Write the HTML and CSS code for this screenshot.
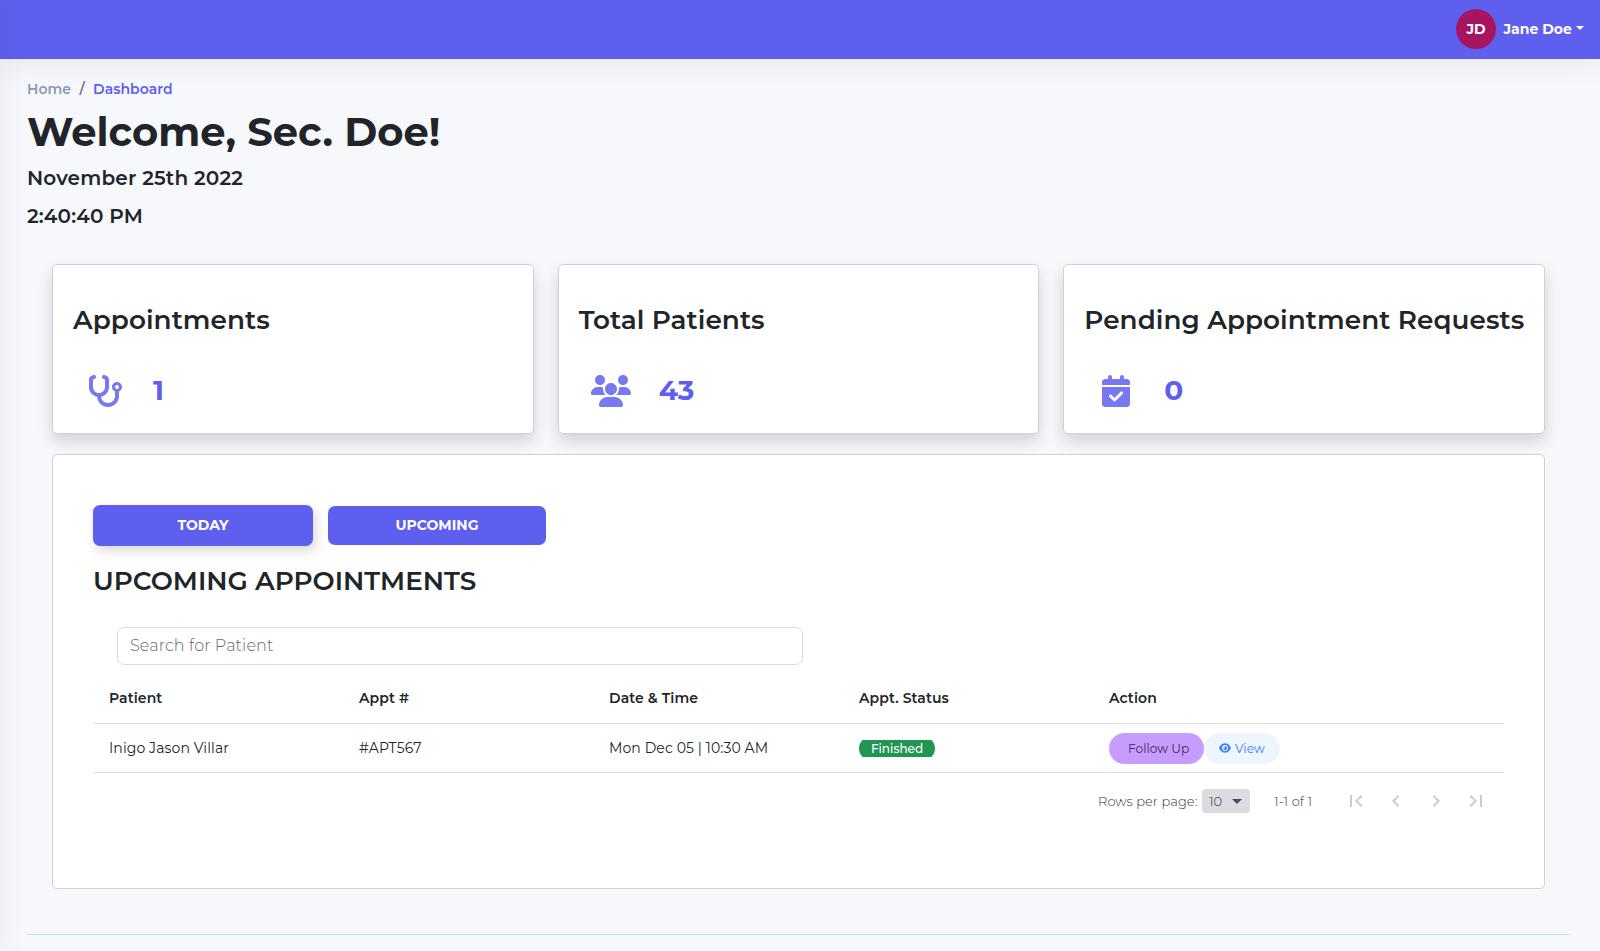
FILE: index.html
```
<!DOCTYPE html>
<html lang="en">
<head>
<meta charset="utf-8">
<title>Dashboard</title>
<link rel="stylesheet" href="styles.css">
</head>
<body>
<header class="topbar">
  <span class="avatar">JD</span>
  <span class="user">Jane Doe</span>
  <span class="caret"></span>
</header>
<main class="page">
  <nav class="crumbs"><a>Home</a><span class="sep">/</span><a class="current">Dashboard</a></nav>
  <h1 class="welcome">Welcome, Sec. Doe!</h1>
  <p class="stamp">November 25th 2022</p>
  <p class="stamp">2:40:40 PM</p>

  <section class="stats">
    <article class="stat">
      <h2>Appointments</h2>
      <div class="figure">
        <svg class="icon icon-steth" viewBox="0 0 576 512"><path d="M142.4 21.9c5.6 16.8-3.5 34.9-20.2 40.5L96 71.1V192c0 53 43 96 96 96s96-43 96-96V71.1l-26.1-8.7c-16.8-5.6-25.8-23.7-20.2-40.5s23.7-25.8 40.5-20.2l26.1 8.7C334.4 19.1 352 43.5 352 71.1V192c0 77.2-54.6 141.6-127.3 156.7C231 404.6 278.4 448 336 448c61.9 0 112-50.1 112-112V265.3c-28.3-12.3-48-40.5-48-73.3c0-44.2 35.8-80 80-80s80 35.8 80 80c0 32.8-19.7 61-48 73.3V336c0 97.2-78.8 176-176 176c-92.9 0-168.9-71.9-175.5-163.1C87.2 334.2 32 269.6 32 192V71.1c0-27.5 17.6-52 43.8-60.7l26.1-8.7c16.8-5.6 34.9 3.5 40.5 20.2zM480 224c17.7 0 32-14.3 32-32s-14.3-32-32-32s-32 14.3-32 32s14.3 32 32 32z"/></svg>
        <span class="num num-appt">1</span>
      </div>
    </article>
    <article class="stat">
      <h2>Total Patients</h2>
      <div class="figure">
        <svg class="icon icon-users" viewBox="0 0 640 512"><path d="M144 160c-44.2 0-80-35.8-80-80S99.8 0 144 0s80 35.8 80 80s-35.8 80-80 80zm368 0c-44.2 0-80-35.8-80-80s35.8-80 80-80s80 35.8 80 80s-35.8 80-80 80zM0 298.7C0 239.8 47.8 192 106.7 192h42.7c15.9 0 31 3.5 44.6 9.7c-1.3 7.2-1.9 14.7-1.9 22.3c0 38.2 16.8 72.5 43.3 96c-.2 0-.4 0-.7 0H21.3C9.6 320 0 310.4 0 298.7zM405.3 320c-.2 0-.4 0-.7 0c26.6-23.5 43.3-57.8 43.3-96c0-7.6-.7-15-1.9-22.3c13.6-6.3 28.7-9.7 44.6-9.7h42.7C592.2 192 640 239.8 640 298.7c0 11.8-9.6 21.3-21.3 21.3H405.3zM416 224c0 53-43 96-96 96s-96-43-96-96s43-96 96-96s96 43 96 96zM128 485.3C128 411.7 187.7 352 261.3 352H378.7C452.3 352 512 411.7 512 485.3c0 14.7-11.9 26.7-26.7 26.7H154.7c-14.7 0-26.7-11.9-26.7-26.7z"/></svg>
        <span class="num">43</span>
      </div>
    </article>
    <article class="stat">
      <h2>Pending Appointment Requests</h2>
      <div class="figure">
        <svg class="icon icon-cal" viewBox="0 0 448 512"><path d="M128 0c17.7 0 32 14.3 32 32V64H288V32c0-17.7 14.3-32 32-32s32 14.3 32 32V64h48c26.5 0 48 21.5 48 48v48H0V112C0 85.5 21.5 64 48 64H96V32c0-17.7 14.3-32 32-32zM0 192H448V464c0 26.5-21.5 48-48 48H48c-26.5 0-48-21.5-48-48V192zM329 305c9.4-9.4 9.4-24.6 0-33.9s-24.6-9.4-33.9 0l-95 95-47-47c-9.4-9.4-24.6-9.4-33.9 0s-9.4 24.6 0 33.9l64 64c9.4 9.4 24.6 9.4 33.9 0L329 305z"/></svg>
        <span class="num num-pending">0</span>
      </div>
    </article>
  </section>

  <section class="panel">
    <div class="tabs">
      <button class="tab tab-active">TODAY</button>
      <button class="tab">UPCOMING</button>
    </div>
    <h2 class="heading">UPCOMING APPOINTMENTS</h2>
    <div class="search">Search for Patient</div>
    <div class="row row-head">
      <div>Patient</div><div>Appt #</div><div>Date &amp; Time</div><div>Appt. Status</div><div>Action</div>
    </div>
    <div class="row row-body">
      <div>Inigo Jason Villar</div><div>#APT567</div><div>Mon Dec 05 | 10:30 AM</div>
      <div><span class="badge-clip"><span class="badge">Finished</span></span></div>
      <div class="actions">
        <span class="pill follow">Follow Up</span>
        <span class="pill view"><svg class="eye" viewBox="0 0 576 512"><path d="M288 32c-80.8 0-145.5 36.8-192.6 80.6C48.6 156 17.3 208 2.500 243.7c-3.300 7.900-3.300 16.700 0 24.600C17.300 304 48.600 356 95.400 399.400C142.500 443.200 207.200 480 288 480s145.500-36.800 192.600-80.600c46.800-43.500 78.100-95.400 93-131.100c3.300-7.900 3.300-16.700 0-24.600c-14.900-35.700-46.200-87.700-93-131.100C433.500 68.800 368.800 32 288 32zM144 256a144 144 0 1 1 288 0 144 144 0 1 1 -288 0zm144-64c0 35.300-28.700 64-64 64c-7.100 0-13.900-1.200-20.300-3.300c-5.500-1.800-11.900 1.600-11.700 7.400c.3 6.900 1.300 13.800 3.200 20.700c13.700 51.200 66.400 81.600 117.600 67.900s81.600-66.400 67.900-117.600c-11.100-41.500-47.800-69.400-88.600-71.100c-5.800-.2-9.200 6.100-7.400 11.700c2.100 6.400 3.300 13.200 3.300 20.300z"/></svg>View</span>
      </div>
    </div>
    <div class="pager">
      <span class="rows">Rows per page:</span>
      <span class="select">10<svg viewBox="0 0 24 24"><path d="M7 10l5 5 5-5z"/></svg></span>
      <span class="range">1-1 of 1</span>
      <span class="steps">
        <svg viewBox="0 0 24 24"><path d="M18.410 16.590L13.820 12l4.590-4.590L17 6l-6 6 6 6zM6 6h2v12H6z"/></svg>
        <svg viewBox="0 0 24 24"><path d="M15.410 7.410L14 6l-6 6 6 6 1.410-1.410L10.830 12z"/></svg>
        <svg viewBox="0 0 24 24"><path d="M10 6L8.590 7.410 13.170 12l-4.580 4.590L10 18l6-6z"/></svg>
        <svg viewBox="0 0 24 24"><path d="M5.590 7.410L10.180 12l-4.590 4.590L7 18l6-6-6-6zM16 6h2v12h-2z"/></svg>
      </span>
    </div>
  </section>
  <hr class="rule">
</main>
</body>
</html>
```
FILE: styles.css
```
* { box-sizing: border-box; }
body {
  margin: 0;
  height: 951px;
  overflow: hidden;
  background: #f7f8fc;
  color: #212529;
  font-family: Montserrat, Inter, sans-serif;
  font-size: 14px;
}
/* edge shadow of the collapsed sidebar */
body::before {
  content: "";
  position: absolute;
  z-index: 2;
  left: -264px;
  top: 0;
  width: 264px;
  height: 951px;
  box-shadow: 0 0 28px rgba(41, 75, 110, .09);
}
h1, h2, p { margin: 0; }
.topbar {
  position: relative;
  height: 59px;
  padding: 0 16px 2px 0;
  display: flex;
  align-items: center;
  justify-content: flex-end;
  background: #5e5fef;
  box-shadow: 0 0 32px rgba(41, 58, 86, .12);
  color: #fff;
  font-weight: 700;
}
.avatar {
  width: 40px;
  height: 40px;
  border-radius: 50%;
  background: #a71560;
  display: flex;
  align-items: center;
  justify-content: center;
}
.user { margin-left: 7.500px; width: 69.500px; white-space: nowrap; }
.caret {
  margin: -2px 0 0 3px;
  border: 4px solid transparent;
  border-top-color: #fff;
  border-bottom: 0;
}
.page { padding: 20px 30px 0 27px; }
.crumbs { display: flex; height: 20px; line-height: 20px; font-weight: 600; color: #6c757d; letter-spacing: .05px; }
.crumbs a { color: #869ab8; }
.crumbs .sep { width: 22px; text-align: center; }
.crumbs .current { color: #5e5fef; }
.welcome { margin-top: 9px; height: 48px; line-height: 48px; font-size: 40px; font-weight: 700; white-space: nowrap; }
.stamp { margin-top: 10px; height: 24px; line-height: 24px; font-size: 20px; font-weight: 600; letter-spacing: .17px; }
.stamp + .stamp { margin-top: 14px; }
.stats {
  margin: 36px 25px 0;
  display: grid;
  grid-template-columns: repeat(3, 1fr);
  gap: 24px;
}
.stat {
  height: 170px;
  padding: 39px 0 0 20px;
  border: 1px solid #d0d1d3;
  border-radius: 5px;
  background: #fff;
  box-shadow: 0 8px 16px rgba(0, 0, 0, .15);
}
.stat h2 { height: 32px; line-height: 32px; font-size: 26.250px; font-weight: 600; white-space: nowrap; letter-spacing: .08px; }
.figure { margin-top: 39px; display: flex; align-items: center; height: 32px; }
.icon { height: 32px; fill: #7879f1; }
.icon-steth { width: 36px; margin-left: 14px; }
.icon-users { width: 40px; margin-left: 12px; }
.icon-cal { width: 28px; margin-left: 18px; }
.num { margin: -2px 0 0 28px; font-size: 28px; font-weight: 700; color: #5e5fef; }
.num-appt { margin-left: 30px; }
.num-pending { margin-left: 34px; }
.panel {
  margin: 20px 25px 0;
  height: 435px;
  padding: 50px 40px 0;
  border: 1px solid #d0d1d3;
  border-radius: 5px;
  background: #fff;
}
.tabs { display: flex; align-items: center; gap: 15px; height: 41px; }
.tab {
  width: 218px;
  height: 39px;
  padding: 0 0 2px;
  border: 0;
  border-radius: 7px;
  background: #5e5fef;
  color: #fff;
  font: 700 14px Montserrat, Inter, sans-serif;
}
.tab-active { width: 220px; height: 41px; box-shadow: 3px 5px 12px rgba(0, 0, 0, .15); }
.heading { margin-top: 19px; height: 32px; line-height: 32px; font-size: 26.250px; font-weight: 600; white-space: nowrap; }
.search {
  margin: 30px 0 0 24px;
  width: 686px;
  height: 38px;
  padding-left: 12px;
  border: 1px solid #dcdde0;
  border-radius: 7px;
  line-height: 35px;
  font-size: 16px;
  font-weight: 300;
  letter-spacing: .12px;
  color: #5f6871;
}
.row {
  display: grid;
  grid-template-columns: repeat(5, 250px);
  width: 1411px;
  padding-left: 16px;
  align-items: center;
  border-bottom: 1px solid #dedfe1;
  letter-spacing: .1px;
}
.row-head { height: 59px; padding-top: 7px; font-weight: 600; }
.row-body { height: 49px; }
.badge-clip { display: flex; width: 76px; height: 17px; overflow: hidden; align-items: center; }
.badge {
  flex: none;
  width: 76px;
  height: 23px;
  line-height: 23px;
  border-radius: 12px;
  background: #219653;
  color: #fff;
  font-size: 12px;
  font-weight: 500;
  letter-spacing: 0;
  text-align: center;
}
.actions { display: flex; }
.pill {
  height: 31px;
  border-radius: 16px;
  display: flex;
  align-items: center;
  font-size: 12.250px;
  letter-spacing: 0;
}
.follow { width: 95px; padding-left: 19px; background: #c69dfd; color: #3f2a66; }
.view { width: 76px; padding-left: 15px; background: #eef5ff; color: #3b7bf2; }
.eye { width: 12px; height: 12px; margin: -1px 4px 0 0; fill: #3b82f6; }
.pager {
  display: flex;
  align-items: center;
  height: 56px;
  padding-left: 1005px;
  font-size: 13px;
  font-weight: 300;
  color: #2f3337;
}
.rows { width: 104px; margin-top: -1px; white-space: nowrap; letter-spacing: .06px; }
.select {
  width: 48px;
  height: 24px;
  padding-left: 7px;
  border-radius: 4px;
  background: #dbdce1;
  display: flex;
  align-items: center;
}
.select svg { width: 24px; margin-left: 3px; fill: #4c4f54; }
.range { margin: -1px 0 0 24px; width: 70px; letter-spacing: .1px; }
.steps { display: flex; gap: 16px; fill: rgba(0, 0, 0, .2); }
.steps svg { width: 24px; height: 24px; }
.rule { margin: 45px 0 0; border: 0; height: 1px; background: #c8dcfd; }
```
